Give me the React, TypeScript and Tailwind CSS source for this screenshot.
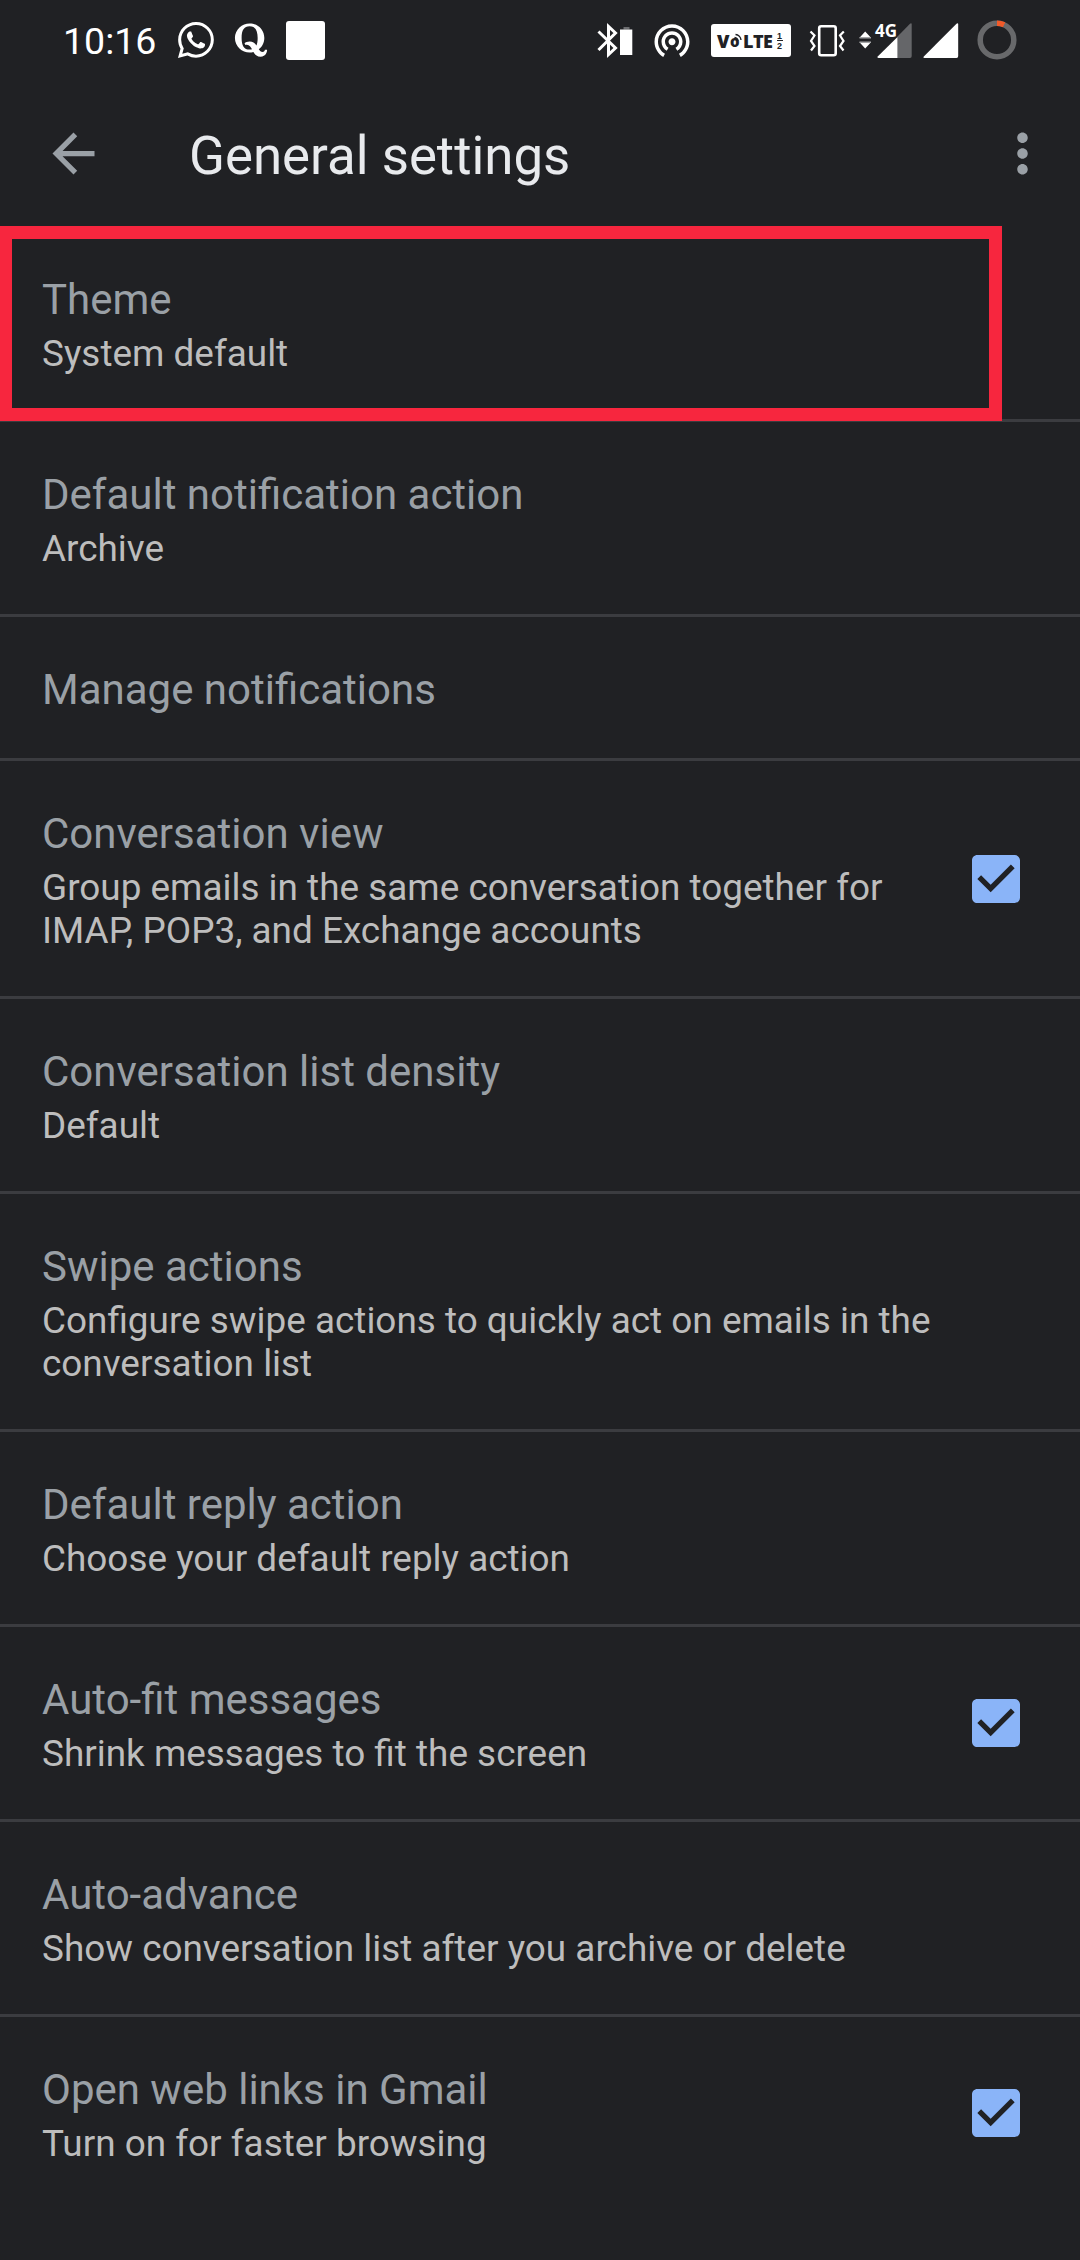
import React from 'react';
import { BsWhatsapp } from 'react-icons/bs';
import { FaQuora } from 'react-icons/fa';
import { MdArrowBack, MdMoreVert, MdWifiTethering } from 'react-icons/md';

interface Setting {
  title: string;
  summary?: string[];
  checked?: boolean;
  highlighted?: boolean;
}

const settings: Setting[] = [
  { title: 'Theme', summary: ['System default'], highlighted: true },
  { title: 'Default notification action', summary: ['Archive'] },
  { title: 'Manage notifications' },
  {
    title: 'Conversation view',
    summary: ['Group emails in the same conversation together for', 'IMAP, POP3, and Exchange accounts'],
    checked: true,
  },
  { title: 'Conversation list density', summary: ['Default'] },
  {
    title: 'Swipe actions',
    summary: ['Configure swipe actions to quickly act on emails in the', 'conversation list'],
  },
  { title: 'Default reply action', summary: ['Choose your default reply action'] },
  { title: 'Auto-fit messages', summary: ['Shrink messages to fit the screen'], checked: true },
  { title: 'Auto-advance', summary: ['Show conversation list after you archive or delete'] },
  { title: 'Open web links in Gmail', summary: ['Turn on for faster browsing'], checked: true },
];

const BluetoothBattery = () => (
  <svg className="ml-[272px] h-[36px] w-[36px] shrink-0" viewBox="0 0 36 36" fill="none">
    <path d="M1.5 9.500 18.5 26 11.5 32.500V4.500L18.5 11 1.5 28" stroke="#fff" strokeWidth="3" />
    <path d="M26.5 5h6v2.5h-6z" fill="#6b6c6f" />
    <path d="M23 7.5h12.3V33H23z" fill="#fff" />
  </svg>
);

const VolteBadge = () => (
  <div className="relative ml-[18px] h-[33px] w-[80px] shrink-0 rounded-[3px] bg-white font-['Open_Sans',sans-serif] font-extrabold text-[#202124]">
    <span className="absolute left-[6px] top-[8px] text-[18px] leading-[18px]">V</span>
    <span className="absolute left-[19px] top-[10px] text-[15px] leading-[15px]">o</span>
    <span className="absolute left-[32px] top-[8px] text-[18px] leading-[18px] tracking-[-0.5px]">LTE</span>
    <svg className="absolute left-[23px] top-[9px] h-[9px] w-[9px]" viewBox="0 0 9 9" fill="none" stroke="#202124" strokeWidth="1.4">
      <path d="M.5 4.500a4 4 0 0 1 3.500 3.500M1.500 1.500a6 6 0 0 1 5.500 5.500" />
    </svg>
    <div className="absolute left-[66px] top-[7px] flex flex-col items-center font-['Liberation_Sans',sans-serif] text-[9px] font-bold leading-[10px]">
      <span>1</span>
      <span className="absolute top-[9px] h-px w-[6px] bg-[#202124]" />
      <span>2</span>
    </div>
  </div>
);

const Vibrate = () => (
  <svg className="ml-[18px] h-[36px] w-[36px] shrink-0" viewBox="0 0 36 36" fill="none" stroke="#fff">
    <rect x="10.200" y="4.300" width="16.500" height="29" rx="2" strokeWidth="2.6" />
    <path d="M1.500 9.500 5.500 13.500 2 19 5.500 24 2 28.500M34.800 9.500 31 13.500 34.500 19 31 24 34.500 28.500" strokeWidth="2.2" />
  </svg>
);

const MobileData = () => (
  <div className="relative ml-[14px] h-[36px] w-[54px] shrink-0">
    <svg className="h-[36px] w-[54px]" viewBox="0 0 54 36">
      <path d="M6.200 9.500 12 15.800H.5zM6.200 26.500 12 20.200H.5z" fill="#fff" />
      <path d="M.5 15h11.500v1.500H.5zM.5 19.500h11.500V21H.5z" fill="#a5a6a8" />
      <path d="M38.500 14.500 51 1.800q1.700-1.300 1.700.8V34q0 2-1.700 2H38.500z" fill="#656669" />
      <path d="M38.500 15v21H19.500q-1.800-.4-.8-1.500z" fill="#fff" />
    </svg>
    <span className="absolute left-[16px] top-0 font-['Noto_Sans',sans-serif] text-[17px] font-bold leading-[17px] text-white">4G</span>
  </div>
);

const StatusBar = () => (
  <div className="flex h-[80px] items-center pl-[63px] text-white">
    <span className="w-[115px] shrink-0 pt-[2px] text-[37.5px] leading-[44px]">10:16</span>
    <BsWhatsapp className="h-[36px] w-[36px] shrink-0" />
    <FaQuora className="ml-[20px] h-[38px] w-[34px] shrink-0" />
    <div className="ml-[18px] h-[39px] w-[39px] shrink-0 rounded-[3px] bg-white" />
    <BluetoothBattery />
    <MdWifiTethering className="ml-[18px] h-[42px] w-[42px] shrink-0" />
    <VolteBadge />
    <Vibrate />
    <MobileData />
    <svg className="ml-[10px] h-[36px] w-[36px] shrink-0" viewBox="0 0 36 36">
      <path d="M.8 34.500 33.500 1.800q1.700-1.300 1.700.8V34q0 2-1.700 2H1.500q-1.800-.2-.7-1.500z" fill="#fff" />
    </svg>
    <svg className="ml-[18px] h-[40px] w-[40px] shrink-0" viewBox="0 0 40 40" fill="none" strokeWidth="5.500">
      <circle cx="20" cy="20" r="16.800" stroke="#68696b" />
      <path d="M20 3.200A16.800 16.800 0 0 1 27.100 4.800" stroke="#f15a29" />
    </svg>
  </div>
);

const Toolbar = () => (
  <header className="flex h-[147px] items-center pl-[42px] pr-[26px] text-[#9aa0a6]">
    <MdArrowBack className="h-[63px] w-[63px] shrink-0" />
    <h1 className="ml-[84px] flex-1 pt-[5px] text-[52.8px] leading-[62px] text-[#e8eaed]">General settings</h1>
    <MdMoreVert className="h-[63px] w-[63px] shrink-0" />
  </header>
);

const Checkbox = () => (
  <svg className="h-[48px] w-[48px] shrink-0" viewBox="3 3 18 18" fill="#8ab4f8">
    <path d="M19 3H5c-1.110 0-2 .9-2 2v14c0 1.100.89 2 2 2h14c1.110 0 2-.9 2-2V5c0-1.100-.89-2-2-2zm-9 14l-5-5 1.410-1.410L10 14.170l7.590-7.590L19 8l-9 9z" />
  </svg>
);

const SettingRow: React.FC<{ setting: Setting }> = ({ setting }) => (
  <li className="relative flex items-center border-b-[3px] border-[#3b3c40] pl-[42px] pr-[60px] last:border-transparent">
    <div className="flex-1 pb-[44px] pt-[48px]">
      <div className="text-[42px] leading-[49px] text-[#9aa0a6]">{setting.title}</div>
      {setting.summary && (
        <div className="mt-[8px] text-[36.9px] leading-[43px] text-[#bdbdbd]">
          {setting.summary.map(line => (
            <div key={line} className="whitespace-nowrap">{line}</div>
          ))}
        </div>
      )}
    </div>
    {setting.checked && <Checkbox />}

    {/* Callout frame around the row */}
    {setting.highlighted && (
      <div className="absolute -left-px -top-px h-[195px] w-[1003px] border-[13px] border-[#f7263e]" />
    )}
  </li>
);

export default function App() {
  return (
    <div className="h-[2260px] w-[1080px] overflow-hidden bg-[#202124] font-['Roboto',sans-serif]">
      <StatusBar />
      <Toolbar />
      <ul>
        {settings.map(setting => (
          <SettingRow key={setting.title} setting={setting} />
        ))}
      </ul>
    </div>
  );
}
